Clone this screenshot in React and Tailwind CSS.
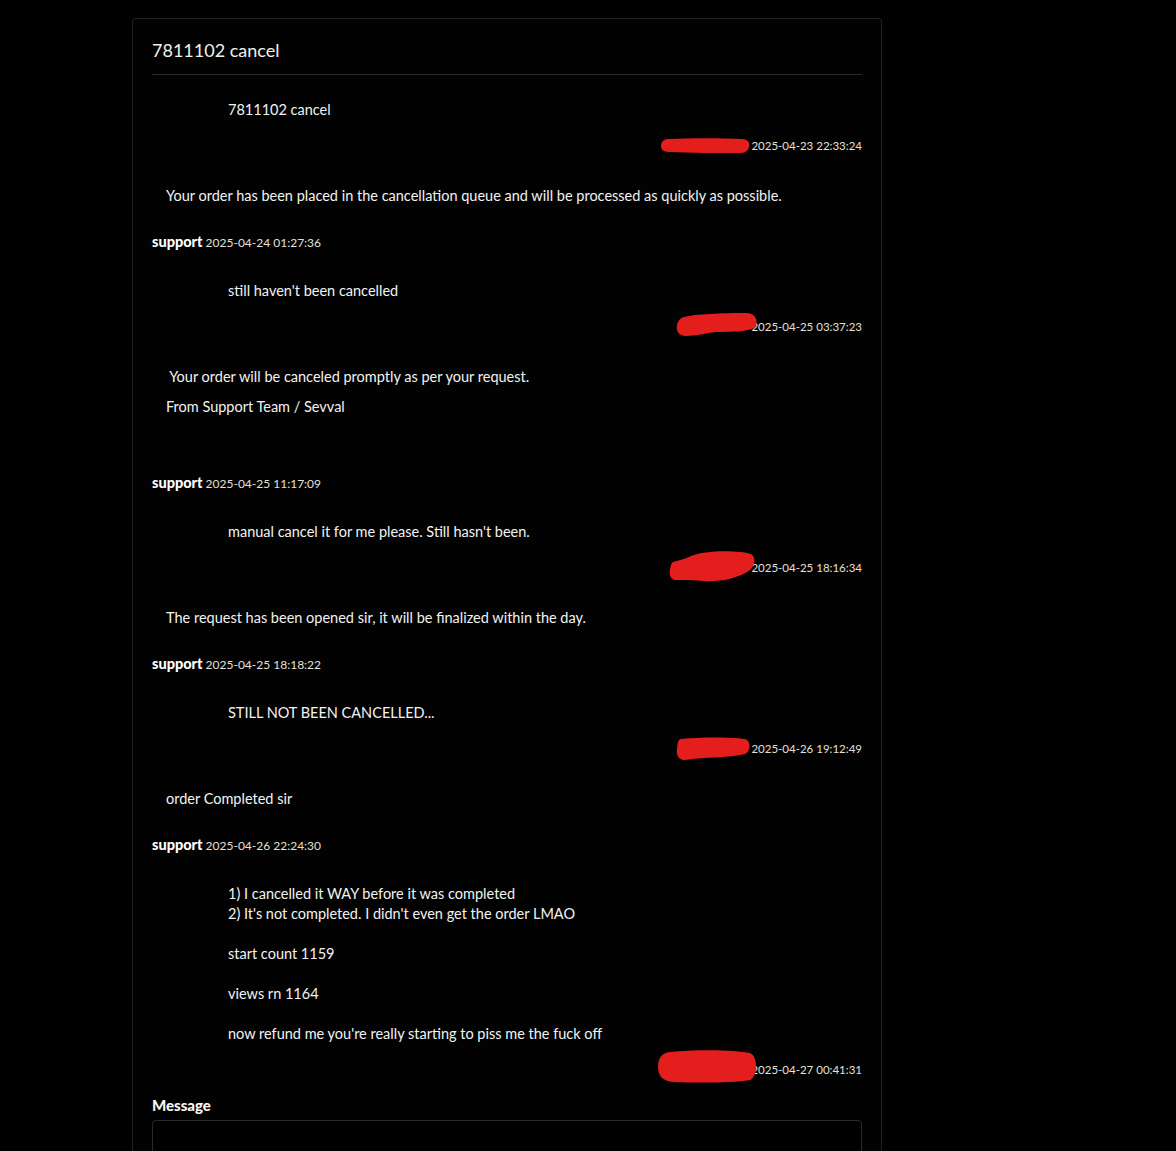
const font = { fontFamily: "Lato, 'Open Sans', sans-serif" };

// red marker scribbles drawn over the customer name
const blobs = {
  a: { w: 89, h: 15, top: 1, right: 112, d: "M7 1 C30 0 60 0 82 1 C88 2 89 6 88 9 C87 13 84 15 78 15 C55 15 30 15 8 14 C2 14 0 11 0 8 C0 4 3 1 7 1 Z" },
  b: { w: 82, h: 23, top: -5, right: 104, d: "M8 4 C20 1 45 0 70 0 C80 0 82 8 80 13 C78 18 60 19 40 19 C30 20 20 23 10 23 C2 23 0 17 1 12 C2 8 4 5 8 4 Z" },
  c: { w: 86, h: 32, top: -9, right: 107, d: "M4 12 C10 10 16 9 22 6 C35 0 70 0 82 4 C88 8 86 18 78 22 C66 29 50 32 35 31 C25 30 15 30 8 30 C1 30 0 24 1 19 C2 15 2 13 4 12 Z" },
  d: { w: 75, h: 23, top: -3, right: 112, d: "M6 2 C25 0 55 0 70 2 C76 4 76 14 70 17 C55 21 30 20 10 23 C3 23 1 17 2 12 C3 7 2 3 6 2 Z" },
  e: { w: 100, h: 33, top: -11, right: 104, d: "M12 2 C40 -1 80 0 92 3 C100 6 100 26 92 30 C75 33 40 33 15 32 C4 31 0 25 0 17 C0 9 3 3 12 2 Z" },
};

function Scribble({ k }) {
  const b = blobs[k];
  return (
    <svg
      width={b.w}
      height={b.h}
      viewBox={`0 0 ${b.w} ${b.h}`}
      className="absolute"
      style={{ top: b.top, right: b.right }}
    >
      <path d={b.d} fill="#e41d1d" />
    </svg>
  );
}

function UserMsg({ first, lines, time, blob }) {
  return (
    <div className={first ? "pt-[25px]" : "pt-[29px]"}>
      <div className="pl-[76px] text-[14.5px] leading-[20px] text-[#f2f2f2]">
        {lines.map((l, i) => (
          <div key={i}>{l || "\u00a0"}</div>
        ))}
      </div>
      <div className="relative mt-[17px] text-right text-[11.5px] leading-[18px] text-[#e3e0d8]">
        <Scribble k={blob} />
        {time}
      </div>
    </div>
  );
}

function SupportMsg({ paras, time, extra }) {
  return (
    <div className="pt-[31px]">
      <div className="pl-[14px] text-[14.5px] leading-[20px] text-[#f2f2f2] space-y-[10px]">
        {paras.map((p, i) => (
          <p key={i}>{p}</p>
        ))}
        {extra && <p>&nbsp;</p>}
      </div>
      <div className="mt-[27px] text-[12px] leading-[18px] text-[#e3e0d8]">
        <span className="font-black text-[14.5px] leading-[18px] text-white">support</span> {time}
      </div>
    </div>
  );
}

export default function App() {
  return (
    <div className="min-h-screen bg-black pl-[132px] pt-[18px]" style={font}>
      <div className="w-[750px] rounded-t-[4px] border border-b-0 border-[#222] bg-[#020202] px-[19px] pt-[18px] pb-10">
        <h3 className="text-[18px] leading-[26px] text-[#f0f0f0]">7811102 cancel</h3>
        <hr className="mt-[11px] border-[#2a2a2a]" />

        <UserMsg first lines={["7811102 cancel"]} time="2025-04-23 22:33:24" blob="a" />
        <SupportMsg
          paras={["Your order has been placed in the cancellation queue and will be processed as quickly as possible."]}
          time="2025-04-24 01:27:36"
        />
        <UserMsg lines={["still haven't been cancelled"]} time="2025-04-25 03:37:23" blob="b" />
        <SupportMsg
          paras={["\u00a0Your order will be canceled promptly as per your request.", "From Support Team / Sevval"]}
          time="2025-04-25 11:17:09"
          extra
        />
        <UserMsg lines={["manual cancel it for me please. Still hasn't been."]} time="2025-04-25 18:16:34" blob="c" />
        <SupportMsg
          paras={["The request has been opened sir, it will be finalized within the day."]}
          time="2025-04-25 18:18:22"
        />
        <UserMsg lines={["STILL NOT BEEN CANCELLED..."]} time="2025-04-26 19:12:49" blob="d" />
        <SupportMsg paras={["order Completed sir"]} time="2025-04-26 22:24:30" />
        <UserMsg
          lines={[
            "1) I cancelled it WAY before it was completed",
            "2) It's not completed. I didn't even get the order LMAO",
            "",
            "start count 1159",
            "",
            "views rn 1164",
            "",
            "now refund me you're really starting to piss me the fuck off",
          ]}
          time="2025-04-27 00:41:31"
          blob="e"
        />

        <label className="mt-[16px] block text-[15px] font-black leading-[20px] text-[#f5f5f5]">Message</label>
        <textarea className="mt-[5px] block h-[110px] w-full resize-none rounded-[4px] border border-[#2a2a2a] bg-black" />
      </div>
    </div>
  );
}
